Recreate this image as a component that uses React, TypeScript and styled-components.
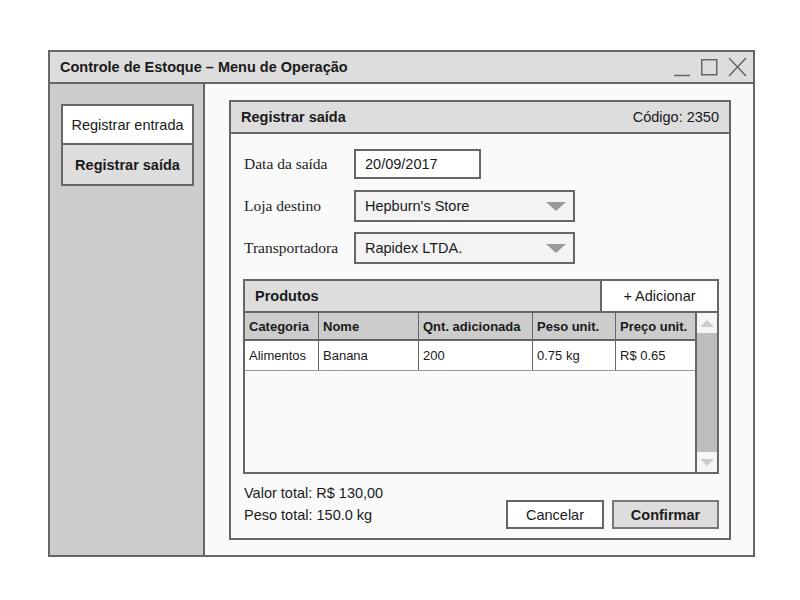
import React from "react";
import styled, { createGlobalStyle } from "styled-components";

const Global = createGlobalStyle`
  html, body { margin: 0; padding: 0; background: #ffffff; }
  body { font-family: "Liberation Sans", Arial, sans-serif; color: #1a1a1a; }
  * { box-sizing: border-box; }
`;

const Page = styled.div`
  padding: 50px 0 0 48px;
`;

const Window = styled.div`
  width: 707px;
  height: 507px;
  border: 2px solid #666;
  display: flex;
  flex-direction: column;
  background: #fafafa;
`;

const TitleBar = styled.div`
  height: 32px;
  flex: none;
  border-bottom: 2px solid #666;
  background: #dddddd;
  display: flex;
  align-items: center;
  justify-content: space-between;
  padding: 0 5px 0 10px;
  font-size: 14.5px;
  font-weight: bold;
`;

const WindowControls = styled.svg`
  display: block;
`;

const Body = styled.div`
  flex: 1;
  display: flex;
  min-height: 0;
`;

const Sidebar = styled.div`
  width: 155px;
  flex: none;
  background: #cccccc;
  border-right: 2px solid #666;
  padding: 20px 0 0 11px;
  display: flex;
  flex-direction: column;
`;

const SideButton = styled.div<{ $active?: boolean; $first?: boolean }>`
  width: 133px;
  height: 41px;
  border: 2px solid #666;
  border-top-width: ${(p) => (p.$first ? "2px" : "0")};
  background: ${(p) => (p.$active ? "#dddddd" : "#ffffff")};
  font-weight: ${(p) => (p.$active ? "bold" : "normal")};
  font-size: 14.5px;
  display: flex;
  align-items: center;
  justify-content: center;
`;

const Content = styled.div`
  flex: 1;
  display: flex;
  padding: 16px 22px 15px 24px;
  background: #fafafa;
`;

const Panel = styled.div`
  flex: 1;
  border: 2px solid #666;
  display: flex;
  flex-direction: column;
`;

const PanelHeader = styled.div`
  height: 32px;
  flex: none;
  background: #dddddd;
  border-bottom: 2px solid #666;
  display: flex;
  align-items: center;
  justify-content: space-between;
  padding: 0 10px;
  font-size: 14.5px;
`;

const PanelTitle = styled.span`
  font-weight: bold;
`;

const PanelBody = styled.div`
  flex: 1;
  display: flex;
  flex-direction: column;
  padding: 15px 10px 9px 12px;
`;

const FormRow = styled.div<{ $mb: number }>`
  display: flex;
  align-items: center;
  margin-bottom: ${(p) => p.$mb}px;
`;

const Label = styled.div`
  width: 111px;
  padding-left: 1px;
  font-family: "Liberation Serif", "Times New Roman", serif;
  font-size: 15.5px;
  color: #222;
`;

const TextInput = styled.div`
  width: 127px;
  height: 30px;
  border: 2px solid #666;
  background: #ffffff;
  padding-left: 9px;
  display: flex;
  align-items: center;
  font-size: 14.5px;
`;

const Select = styled.div`
  width: 221px;
  height: 32px;
  border: 2px solid #666;
  background: #f3f3f3;
  padding: 0 7px 0 9px;
  display: flex;
  align-items: center;
  justify-content: space-between;
  font-size: 14.5px;
`;

const Caret = styled.svg`
  display: block;
`;

const Table = styled.div`
  margin-top: 5px;
  width: 476px;
  height: 195px;
  border: 2px solid #666;
  display: flex;
  flex-direction: column;
`;

const TableTitleBar = styled.div`
  height: 32px;
  flex: none;
  display: flex;
  background: #dddddd;
  border-bottom: 2px solid #666;
`;

const TableTitle = styled.div`
  flex: 1;
  padding-left: 10px;
  display: flex;
  align-items: center;
  font-weight: bold;
  font-size: 14.5px;
`;

const AddButton = styled.div`
  width: 117px;
  border-left: 2px solid #666;
  background: #ffffff;
  display: flex;
  align-items: center;
  justify-content: center;
  font-size: 14.5px;
`;

const TableBody = styled.div`
  flex: 1;
  display: flex;
  min-height: 0;
`;

const Grid = styled.div`
  flex: 1;
  background: #fafafa;
`;

const Row = styled.div<{ $head?: boolean }>`
  display: grid;
  grid-template-columns: 74px 100px 114px 83px 79px;
  height: ${(p) => (p.$head ? 28 : 30)}px;
  background: ${(p) => (p.$head ? "#cccccc" : "#ffffff")};
  border-bottom: ${(p) => (p.$head ? "2px solid #666" : "1px solid #999")};
`;

const Cell = styled.div<{ $head?: boolean; $last?: boolean }>`
  border-right: ${(p) => (p.$last ? "none" : "1px solid #666")};
  padding-left: 4px;
  display: flex;
  align-items: center;
  font-size: 13px;
  font-weight: ${(p) => (p.$head ? "bold" : "normal")};
  white-space: nowrap;
  overflow: hidden;
`;

const Scrollbar = styled.div`
  width: 22px;
  flex: none;
  border-left: 2px solid #666;
  display: flex;
  flex-direction: column;
  background: #f2f2f2;
`;

const ScrollArrow = styled.div`
  height: 20px;
  flex: none;
  display: flex;
  align-items: center;
  justify-content: center;
  background: #f5f5f5;
`;

const ScrollThumb = styled.div`
  flex: 1;
  background: #bdbdbd;
`;

const Footer = styled.div`
  margin-top: auto;
  display: flex;
  justify-content: space-between;
  align-items: flex-end;
`;

const Totals = styled.div`
  padding-left: 1px;
  padding-bottom: 3px;
  font-size: 14.5px;
  line-height: 22px;
`;

const Actions = styled.div`
  display: flex;
  gap: 8px;
`;

const Button = styled.div<{ $primary?: boolean; $w: number }>`
  width: ${(p) => p.$w}px;
  height: 29px;
  border: 2px solid ${(p) => (p.$primary ? "#777" : "#666")};
  background: ${(p) => (p.$primary ? "#dddddd" : "#ffffff")};
  font-weight: ${(p) => (p.$primary ? "bold" : "normal")};
  font-size: 14.5px;
  display: flex;
  align-items: center;
  justify-content: center;
`;

const DropCaret = () => (
  <Caret width="20" height="9" viewBox="0 0 20 9">
    <polygon points="0,0 20,0 10,9" fill="#999" />
  </Caret>
);

const columns = ["Categoria", "Nome", "Qnt. adicionada", "Peso unit.", "Preço unit."];
const rows = [["Alimentos", "Banana", "200", "0.75 kg", "R$ 0.65"]];

export default function App() {
  return (
    <>
      <Global />
      <Page>
        <Window>
          <TitleBar>
            <span>Controle de Estoque – Menu de Operação</span>
            <WindowControls width="76" height="20" viewBox="0 0 76 20">
              <line x1="2" y1="18.5" x2="18" y2="18.5" stroke="#666" strokeWidth="1.5" />
              <rect x="29.75" y="2.75" width="15" height="15" fill="none" stroke="#666" strokeWidth="1.5" />
              <line x1="57" y1="1" x2="74" y2="19" stroke="#666" strokeWidth="1.5" />
              <line x1="74" y1="1" x2="57" y2="19" stroke="#666" strokeWidth="1.5" />
            </WindowControls>
          </TitleBar>
          <Body>
            <Sidebar>
              <SideButton $first>Registrar entrada</SideButton>
              <SideButton $active>Registrar saída</SideButton>
            </Sidebar>
            <Content>
              <Panel>
                <PanelHeader>
                  <PanelTitle>Registrar saída</PanelTitle>
                  <span>Código: 2350</span>
                </PanelHeader>
                <PanelBody>
                  <FormRow $mb={11}>
                    <Label>Data da saída</Label>
                    <TextInput>20/09/2017</TextInput>
                  </FormRow>
                  <FormRow $mb={10}>
                    <Label>Loja destino</Label>
                    <Select>
                      <span>Hepburn's Store</span>
                      <DropCaret />
                    </Select>
                  </FormRow>
                  <FormRow $mb={10}>
                    <Label>Transportadora</Label>
                    <Select>
                      <span>Rapidex LTDA.</span>
                      <DropCaret />
                    </Select>
                  </FormRow>
                  <Table>
                    <TableTitleBar>
                      <TableTitle>Produtos</TableTitle>
                      <AddButton>+ Adicionar</AddButton>
                    </TableTitleBar>
                    <TableBody>
                      <Grid>
                        <Row $head>
                          {columns.map((c, i) => (
                            <Cell key={c} $head $last={i === columns.length - 1}>
                              {c}
                            </Cell>
                          ))}
                        </Row>
                        {rows.map((r, ri) => (
                          <Row key={ri}>
                            {r.map((v, i) => (
                              <Cell key={i} $last={i === r.length - 1}>
                                {v}
                              </Cell>
                            ))}
                          </Row>
                        ))}
                      </Grid>
                      <Scrollbar>
                        <ScrollArrow>
                          <svg width="14" height="7" viewBox="0 0 14 7">
                            <polygon points="0,7 14,7 7,0" fill="#ccc" />
                          </svg>
                        </ScrollArrow>
                        <ScrollThumb />
                        <ScrollArrow>
                          <svg width="14" height="7" viewBox="0 0 14 7">
                            <polygon points="0,0 14,0 7,7" fill="#ccc" />
                          </svg>
                        </ScrollArrow>
                      </Scrollbar>
                    </TableBody>
                  </Table>
                  <Footer>
                    <Totals>
                      <div>Valor total: R$ 130,00</div>
                      <div>Peso total: 150.0 kg</div>
                    </Totals>
                    <Actions>
                      <Button $w={98}>Cancelar</Button>
                      <Button $w={107} $primary>
                        Confirmar
                      </Button>
                    </Actions>
                  </Footer>
                </PanelBody>
              </Panel>
            </Content>
          </Body>
        </Window>
      </Page>
    </>
  );
}
